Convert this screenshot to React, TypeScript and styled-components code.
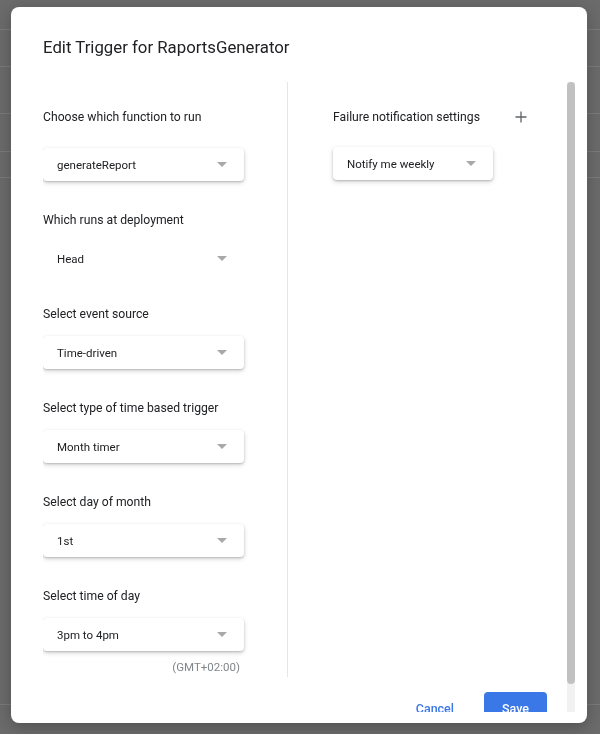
import React from "react";
import styled, { createGlobalStyle } from "styled-components";

const GlobalStyle = createGlobalStyle`
  html, body { margin: 0; padding: 0; }
  body {
    background: #6b6b6b;
    font-family: Roboto, "Noto Sans", Arial, sans-serif;
    width: 600px;
    height: 734px;
    overflow: hidden;
  }
`;

const Backdrop = styled.div`
  display: flex;
  flex-direction: column;
  width: 600px;
  height: 734px;
  background: #6b6b6b;
`;

const BgLine = styled.div<{ $top: number }>`
  height: 1px;
  margin-top: ${(p) => p.$top}px;
  background: #7b7b7b;
`;

const Overlay = styled.div`
  position: fixed;
  inset: 0;
  display: flex;
  align-items: flex-start;
  padding: 7px 0 0 11px;
  box-sizing: border-box;
`;

const Dialog = styled.div`
  width: 576px;
  height: 716px;
  background: #ffffff;
  border-radius: 8px;
  box-shadow: 0 4px 16px rgba(0, 0, 0, 0.25);
  display: flex;
  flex-direction: column;
  padding: 0 12px 11px 32px;
  box-sizing: border-box;
`;

const Title = styled.h2`
  margin: 28px 0 23px;
  font-family: Roboto, "Noto Sans", Arial, sans-serif;
  font-size: 16.8px;
  line-height: 24px;
  font-weight: 400;
  color: #202124;
`;

const ScrollFrame = styled.div`
  flex: 1;
  min-height: 0;
  display: flex;
`;

const ScrollViewport = styled.div`
  flex: 1;
  min-width: 0;
  overflow: hidden;
`;

const ScrollTrack = styled.div`
  width: 8px;
  background: #f1f1f1;
  display: flex;
  flex-direction: column;
`;

const ScrollThumb = styled.div`
  height: 602px;
  background: #c1c1c1;
  border-radius: 4px;
`;

const Columns = styled.div`
  display: flex;
`;

const LeftCol = styled.div`
  width: 244px;
  padding: 25px 0 2px 0;
  border-right: 1px solid #e6e6e6;
  display: flex;
  flex-direction: column;
`;

const RightCol = styled.div`
  flex: 1;
  padding: 25px 34px 0 45px;
  display: flex;
  flex-direction: column;
`;

const Field = styled.div<{ $last?: boolean }>`
  display: flex;
  flex-direction: column;
  margin-bottom: ${(p) => (p.$last ? 0 : 29)}px;
`;

const LabelRow = styled.div<{ $gap: number }>`
  display: flex;
  align-items: center;
  justify-content: space-between;
  height: 20px;
  margin-bottom: ${(p) => p.$gap}px;
`;

const Label = styled.span`
  font-size: 12.2px;
  color: #202124;
`;

const PlusButton = styled.button`
  width: 24px;
  height: 24px;
  border: none;
  background: transparent;
  padding: 0;
  display: flex;
  align-items: center;
  justify-content: center;
  cursor: pointer;
`;

const Select = styled.div<{ $flat?: boolean; $width: number }>`
  width: ${(p) => p.$width}px;
  height: 33px;
  box-sizing: border-box;
  display: flex;
  align-items: center;
  justify-content: space-between;
  padding: 0 17px 0 14px;
  background: #ffffff;
  border-radius: 4px;
  box-shadow: ${(p) =>
    p.$flat
      ? "none"
      : "0 1px 2px rgba(0,0,0,0.18), 0 2px 5px rgba(0,0,0,0.16)"};
`;

const SelectText = styled.span`
  font-size: 11.5px;
  color: #202124;
`;

const Caret = styled.span`
  width: 0;
  height: 0;
  border-left: 5px solid transparent;
  border-right: 5px solid transparent;
  border-top: 5px solid #a8a8a8;
`;

const TimeZone = styled.div`
  margin-top: 8px;
  width: 197px;
  text-align: right;
  font-size: 11.5px;
  line-height: 16px;
  color: #80868b;
`;

const Footer = styled.div`
  display: flex;
  justify-content: flex-end;
  align-items: center;
  gap: 14px;
  padding: 15px 20px 16px 0;
`;

const TextButton = styled.button`
  height: 32px;
  padding: 0 16px;
  border: none;
  background: transparent;
  color: #3b78e7;
  font-family: Roboto, "Noto Sans", Arial, sans-serif;
  font-size: 12.5px;
  font-weight: 500;
  cursor: pointer;
`;

const PrimaryButton = styled.button`
  height: 32px;
  width: 63px;
  border: none;
  border-radius: 4px;
  background: #3b78e7;
  color: #ffffff;
  font-family: Roboto, "Noto Sans", Arial, sans-serif;
  font-size: 12.5px;
  font-weight: 500;
  cursor: pointer;
`;

const PlusIcon = () => (
  <svg width="12" height="12" viewBox="0 0 12 12">
    <path d="M6 0.5V11.5M0.5 6H11.5" stroke="#5f6368" strokeWidth="1.3" fill="none" />
  </svg>
);

type FieldDef = { label: string; value: string; flat?: boolean; gap: number };

const fields: FieldDef[] = [
  { label: "Choose which function to run", value: "generateReport", gap: 21 },
  { label: "Which runs at deployment", value: "Head", flat: true, gap: 12 },
  { label: "Select event source", value: "Time-driven", gap: 12 },
  { label: "Select type of time based trigger", value: "Month timer", gap: 12 },
  { label: "Select day of month", value: "1st", gap: 12 },
  { label: "Select time of day", value: "3pm to 4pm", gap: 12 },
];

const bgLines = [29, 37, 47, 38, 26, 527];

export default function App() {
  return (
    <>
      <GlobalStyle />
      <Backdrop>
        {bgLines.map((t, i) => (
          <BgLine key={i} $top={i === 0 ? t : t - 1} />
        ))}
      </Backdrop>
      <Overlay>
        <Dialog>
          <Title>Edit Trigger for RaportsGenerator</Title>
          <ScrollFrame>
            <ScrollViewport>
              <Columns>
                <LeftCol>
                  {fields.map((f, i) => (
                    <Field key={f.label} $last={i === fields.length - 1}>
                      <LabelRow $gap={f.gap}>
                        <Label>{f.label}</Label>
                      </LabelRow>
                      <Select $flat={f.flat} $width={201}>
                        <SelectText>{f.value}</SelectText>
                        <Caret />
                      </Select>
                    </Field>
                  ))}
                  <TimeZone>(GMT+02:00)</TimeZone>
                </LeftCol>
                <RightCol>
                  <Field $last>
                    <LabelRow $gap={20}>
                      <Label>Failure notification settings</Label>
                      <PlusButton aria-label="Add">
                        <PlusIcon />
                      </PlusButton>
                    </LabelRow>
                    <Select $width={160}>
                      <SelectText>Notify me weekly</SelectText>
                      <Caret />
                    </Select>
                  </Field>
                </RightCol>
              </Columns>
              <Footer>
                <TextButton>Cancel</TextButton>
                <PrimaryButton>Save</PrimaryButton>
              </Footer>
            </ScrollViewport>
            <ScrollTrack>
              <ScrollThumb />
            </ScrollTrack>
          </ScrollFrame>
        </Dialog>
      </Overlay>
    </>
  );
}
